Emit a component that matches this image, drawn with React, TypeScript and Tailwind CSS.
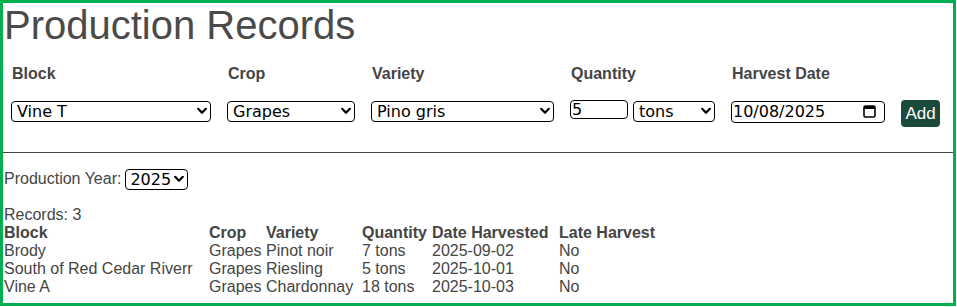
const textFont = { fontFamily: '"Liberation Sans", Arial, sans-serif' };

function Chevron({ right = 'right-[5px]' }: { right?: string }) {
  return (
    <svg
      className={`pointer-events-none absolute ${right} top-1/2 -translate-y-1/2`}
      width="10"
      height="7"
      viewBox="0 0 10 7"
    >
      <polyline points="1.2,1.3 5,5.2 8.8,1.3" fill="none" stroke="#000" strokeWidth="2.2" strokeLinecap="round" strokeLinejoin="round" />
    </svg>
  );
}

function Select({ value, options, w, pad = 'pl-[5px] pr-[20px]', chev }: { value: string; options: string[]; w: string; pad?: string; chev?: string }) {
  return (
    <div className={`relative h-[21px] ${w}`}>
      <select
        defaultValue={value}
        className={`h-full w-full appearance-none rounded-[4px] border border-black bg-white ${pad} text-[16px] leading-[19px] text-black outline-none font-['DejaVu_Sans',sans-serif]`}
      >
        {options.map((o) => (
          <option key={o}>{o}</option>
        ))}
      </select>
      <Chevron right={chev} />
    </div>
  );
}

function Field({ label, children }: { label: string; children: React.ReactNode }) {
  return (
    <div className="flex flex-col">
      <div className="h-[18px] text-[16px] font-bold leading-[18px] text-[#454545] pl-[1px]" style={textFont}>
        {label}
      </div>
      <div className="mt-[17px] flex gap-[5px]">{children}</div>
    </div>
  );
}

const rows = [
  ['Brody', 'Grapes', 'Pinot noir', '7 tons', '2025-09-02', 'No'],
  ['South of Red Cedar Riverr', 'Grapes', 'Riesling', '5 tons', '2025-10-01', 'No'],
  ['Vine A', 'Grapes', 'Chardonnay', '18 tons', '2025-10-03', 'No'],
];

export default function App() {
  return (
    <div className="h-[306px] w-[956px] overflow-hidden border-[3px] border-[#00b050] bg-white text-[#454545]" style={textFont}>
      <h1 className="-mt-[1px] pl-[1px] text-[40px] font-normal leading-[47px] text-[#4a4a4a]">Production Records</h1>

      <div className="mt-[16px] flex gap-[16px] pl-[8px]">
        <Field label="Block">
          <Select value="Vine T" options={['Vine T', 'Vine A', 'Brody']} w="w-[200px]" chev="right-[4px]" />
        </Field>
        <Field label="Crop">
          <Select value="Grapes" options={['Grapes']} w="w-[128px]" chev="right-[4px]" />
        </Field>
        <Field label="Variety">
          <Select value="Pino gris" options={['Pino gris', 'Riesling', 'Chardonnay']} w="w-[183px]" chev="right-[4px]" />
        </Field>
        <Field label="Quantity">
          <input
            type="text"
            defaultValue="5"
            className="h-[19px] w-[58px] rounded-[4px] border border-black bg-white pl-[1px] text-[16px] leading-[17px] text-black outline-none font-['DejaVu_Sans',sans-serif]"
          />
          <Select value="tons" options={['tons', 'lbs']} w="w-[82px]" chev="right-[4px]" />
        </Field>
        <Field label="Harvest Date">
          <div className="relative h-[22px] w-[154px]">
            <input
              type="text"
              defaultValue="10/08/2025"
              className="h-full w-full rounded-[4px] border border-black bg-white pl-[1px] text-[16px] leading-[20px] text-black outline-none font-['DejaVu_Sans',sans-serif]"
            />
            <svg
              className="pointer-events-none absolute right-[9px] top-1/2 -translate-y-1/2"
              width="13"
              height="14"
              viewBox="0 0 13 14"
            >
              <rect x="1" y="2" width="11" height="11" rx="1.5" fill="none" stroke="#000" strokeWidth="1.6" />
              <rect x="1" y="2" width="11" height="3" fill="#000" />
            </svg>
          </div>
        </Field>
        <div className="pt-[35px]">
          <button className="h-[27px] w-[39px] rounded-[4px] bg-[#1a4a3c] text-[17px] leading-[27px] text-white">Add</button>
        </div>
      </div>

      <div className="mt-[25px] h-[1px] bg-[#444]" />

      <div className="mt-[15px] flex h-[21px] items-center pl-[1px] text-[16px]">
        <span>Production Year:</span>
        <div className="ml-[4px]">
          <Select value="2025" options={['2025', '2024']} w="w-[63px]" pad="pl-[4px] pr-[14px]" chev="right-[4px]" />
        </div>
      </div>

      <div className="mt-[17px] pl-[1px] text-[16px] leading-[18px]">
        <div>Records: 3</div>
        <div className="grid grid-cols-[205px_57px_96px_70px_127px_auto]">
          {['Block', 'Crop', 'Variety', 'Quantity', 'Date Harvested', 'Late Harvest'].map((h) => (
            <div key={h} className="font-bold">
              {h}
            </div>
          ))}
          {rows.map((r) =>
            r.map((c, i) => <div key={r[0] + i}>{c}</div>)
          )}
        </div>
      </div>
    </div>
  );
}
